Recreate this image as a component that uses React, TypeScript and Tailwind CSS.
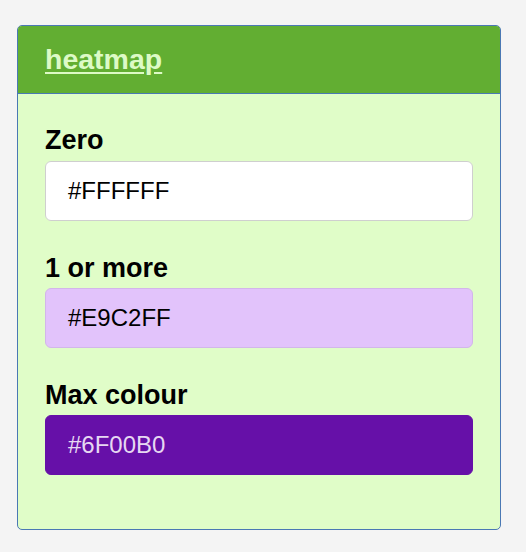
const fields = [
  { label: 'Zero', value: '#FFFFFF', box: 'bg-white border-[#cfcfcf] text-black' },
  { label: '1 or more', value: '#E9C2FF', box: 'bg-[#e2c3fb] border-[#d2b6ea] text-black' },
  { label: 'Max colour', value: '#6F00B0', box: 'bg-[#6610a8] border-[#6610a8] text-[#e6d8f2]' },
];

export default function App() {
  return (
    <div className="min-h-[552px] bg-[#f4f4f4] pt-[25px] pl-[17px] font-['Liberation_Sans',Arial,sans-serif]">
      <div className="w-[484px] rounded-[5px] border border-[#4a78b4] bg-[#e0fdc8] overflow-hidden">
        {/* Header */}
        <div className="bg-[#62ae32] border-b border-[#4a78b4] px-[27px] pt-[16px] pb-[17px]">
          <a href="#" className="text-[28.5px] leading-[1.2] font-bold text-[#ddfac6] underline underline-offset-[3px]">
            heatmap
          </a>
        </div>

        {/* Body */}
        <div className="px-[27px] pt-[30px] pb-[23px]">
          {fields.map((f) => (
            <div key={f.label} className="mb-[31px]">
              <label className="block text-[27px] leading-[1.2] font-bold text-black">{f.label}</label>
              <div className={`mt-[4px] h-[60px] rounded-[6px] border flex items-center pl-[22px] text-[24px] ${f.box}`}>
                {f.value}
              </div>
            </div>
          ))}
        </div>
      </div>
    </div>
  );
}
